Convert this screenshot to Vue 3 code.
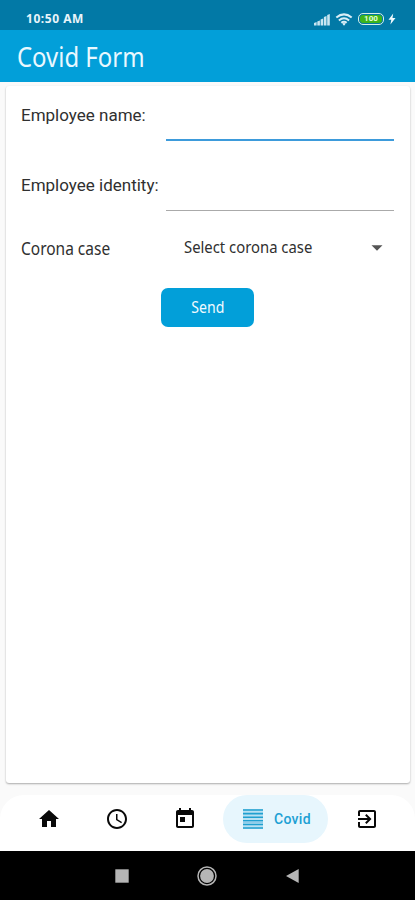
<script setup>
import { ref } from 'vue'
const employeeName = ref('')
const employeeIdentity = ref('')
</script>

<template>
  <div class="screen">
    <header class="status">
      <span class="time">10:50 AM</span>
      <div class="indicators">
        <svg class="signal" width="17" height="13" viewBox="0 0 17 13">
          <path d="M0 12.500v-2.500l2.600-1v3.500zM3.300 12.500V8.500l2.600-1v5zM6.600 12.500V6.500l2.600-1v7zM9.900 12.500V4l2.600-1v9.500zM13.200 12.500V2l2.600-1v11.500z" fill="#cbe6f1" />
        </svg>
        <svg class="wifi" width="18" height="13" viewBox="0 0 18 13">
          <g fill="none" stroke="#d8edf6" stroke-width="2">
            <path d="M1.300 4.600Q9-1.800 16.700 4.600M3.900 7.400Q9 3.200 14.100 7.400M6.300 9.800Q9 7.700 11.700 9.800" />
          </g>
          <path d="M7.200 10.600Q9 9.300 10.800 10.600L9 12.700z" fill="#e2f2f9" />
        </svg>
        <span class="battery"><span class="level">100</span></span>
        <svg class="bolt" width="8" height="12" viewBox="0 0 8 12">
          <path d="M5.200.5.500 6.800h2.800L2.400 11.500 7.500 5H4.500z" fill="#f1fafe" />
        </svg>
      </div>
    </header>
    <div class="appbar"><h1>Covid Form</h1></div>

    <main class="content">
      <section class="card">
        <div class="row name-row">
          <label><span class="t-name">Employee name:</span></label>
          <input v-model="employeeName" class="field active" />
        </div>
        <div class="row identity-row">
          <label><span class="t-identity">Employee identity:</span></label>
          <input v-model="employeeIdentity" class="field" />
        </div>
        <div class="row case-row">
          <label><span class="t-corona">Corona case</span></label>
          <div class="select">
            <span class="t-select">Select corona case</span>
            <svg width="12" height="6" viewBox="0 0 12 6"><path d="M.5.300h11L6 5.800z" fill="#555" /></svg>
          </div>
        </div>
        <button class="send"><span class="t-send">Send</span></button>
      </section>
    </main>

    <nav class="tabs">
      <svg class="icon home" viewBox="0 0 24 24"><path d="M10 20v-6h4v6h5v-8h3L12 3 2 12h3v8z" /></svg>
      <svg class="icon clock" viewBox="0 0 24 24"><path d="M11.990 2C6.470 2 2 6.480 2 12s4.470 10 9.990 10C17.520 22 22 17.520 22 12S17.520 2 11.990 2zM12 20c-4.420 0-8-3.580-8-8s3.580-8 8-8 8 3.580 8 8-3.580 8-8 8zM12.500 7H11v6l5.250 3.150.75-1.230-4.500-2.670z" /></svg>
      <svg class="icon calendar" viewBox="0 0 24 24"><path d="M19 3h-1V1h-2v2H8V1H6v2H5c-1.110 0-1.990.9-1.990 2L3 19c0 1.100.89 2 2 2h14c1.100 0 2-.9 2-2V5c0-1.100-.9-2-2-2zm0 16H5V8h14v11zM7 10h5v5H7z" /></svg>
      <div class="pill">
        <svg class="lines" width="20" height="20" viewBox="0 0 20 20">
          <path d="M0 0h20v20H0z" fill="#b9e1f2" />
          <path d="M0 1h20M0 4.600h20M0 8.300h20M0 11.700h20M0 15.500h20M0 19h20" stroke="#20a0d0" stroke-width="1.600" />
          <path d="M0 13.600h20" stroke="#8fcdea" stroke-width="2.200" />
        </svg>
        <span class="t-covid">Covid</span>
      </div>
      <svg class="icon exit" viewBox="0 0 24 24"><path d="M10.090 15.590 11.500 17l5-5-5-5-1.410 1.410L12.670 11H3v2h9.670zM19 3H5c-1.110 0-2 .9-2 2v4h2V5h14v14H5v-4H3v4c0 1.100.89 2 2 2h14c1.100 0 2-.9 2-2V5c0-1.100-.9-2-2-2z" /></svg>
    </nav>

    <footer class="system">
      <svg class="recent" width="14" height="14" viewBox="0 0 14 14"><path d="M.3.300h13.400v13.400H.3z" fill="#b5b5b5" /></svg>
      <svg class="circle" width="20" height="20" viewBox="0 0 20 20">
        <circle cx="10" cy="10" r="9" fill="none" stroke="#b5b5b5" stroke-width="1.500" />
        <circle cx="10" cy="10" r="6.900" fill="#b5b5b5" />
      </svg>
      <svg class="back" width="13" height="14" viewBox="0 0 13 14"><path d="M12.700 0v14L0 7z" fill="#b5b5b5" /></svg>
    </footer>
  </div>
</template>

<style>
body { margin: 0; background: #fff; }
</style>

<style scoped>
* { box-sizing: border-box; }
.screen {
  width: 415px;
  height: 900px;
  display: flex;
  flex-direction: column;
  background: #fafafa;
  font-family: "Noto Sans", sans-serif;
  color: #303030;
  overflow: hidden;
}
span { white-space: nowrap; }
.status {
  height: 30px;
  flex: none;
  background: #0279a6;
  display: flex;
  justify-content: space-between;
  padding: 8px 19px 0 26px;
}
.time {
  font: 700 12px/22px "Noto Sans", sans-serif;
  letter-spacing: .55px;
  color: #e9f5fa;
}
.indicators { display: flex; align-items: center; height: 22px; }
.wifi { margin-left: 4px; }
.battery {
  margin-left: 5px;
  width: 26px;
  height: 12px;
  border: 1.500px solid #d5efe7;
  border-radius: 5px;
  padding: 1px;
  display: flex;
}
.level {
  flex: 1;
  border-radius: 3px;
  background: #3cb41b;
  color: #e6ffdc;
  font: 700 8px/8px Roboto, sans-serif;
  text-align: center;
}
.bolt { margin-left: 4px; }
.appbar {
  height: 52px;
  flex: none;
  background: #029fd9;
  padding-left: 17px;
  display: flex;
  align-items: center;
}
h1 {
  margin: 2px 0 0;
  font: 400 27px/50px "Noto Sans", sans-serif;
  color: #e9f8ff;
  transform: scaleX(.886);
  transform-origin: left;
}
.content { flex: none; height: 713px; padding: 4px 5px 0 6px; }
.card {
  height: 697px;
  background: #fff;
  border-radius: 3px;
  box-shadow: 0 1px 2px rgba(0, 0, 0, .32);
  padding: 0 16px 0 15px;
  display: flex;
  flex-direction: column;
}
.row { display: flex; font-size: 17px; }
.row label { width: 145px; flex: none; line-height: 24px; }
.row label span, .t-select { display: inline-block; transform-origin: left; }
.name-row { height: 55px; padding-top: 17px; }
.identity-row { height: 70px; padding-top: 32px; }
.field {
  flex: 1;
  min-width: 0;
  border: 0;
  outline: 0;
  background: transparent;
  border-bottom: 1px solid #aaa;
  padding: 0;
}
.field.active { border-bottom: 2px solid #3d9bdb; }
.t-name, .t-identity { font-family: Roboto, sans-serif; font-size: 17px; }
.case-row { padding-top: 25px; height: 77px; }
.select {
  flex: 1;
  display: flex;
  justify-content: space-between;
  align-items: center;
  height: 24px;
  padding: 0 11px 0 18px;
}
.row .t-corona { font-size: 18px; transform: scaleX(.86); }
.t-select { font-size: 17px; line-height: 22px; margin-bottom: 2px; transform: scaleX(.873); }
.send {
  align-self: center;
  width: 93px;
  height: 39px;
  border: 0;
  border-radius: 7px;
  padding: 0;
  background: #029fd9;
  color: #f1faff;
  font: 400 16px/39px "Noto Sans", sans-serif;
}
.t-send { display: inline-block; transform: scaleX(.88); }
.tabs {
  flex: none;
  height: 56px;
  background: #fff;
  border-radius: 24px 24px 0 0;
  display: flex;
  align-items: center;
  padding: 0 36px 8px 37px;
}
.icon { width: 24px; height: 24px; fill: #090909; flex: none; }
.clock, .calendar { margin-left: 44px; }
.exit { margin-left: 27px; }
.pill {
  width: 105px;
  height: 48px;
  margin-left: 26px;
  border-radius: 24px;
  background: #e7f6fd;
  display: flex;
  align-items: center;
  padding-left: 20px;
  gap: 11px;
}
.t-covid { font: 500 14px/20px Roboto, sans-serif; letter-spacing: .3px; color: #20a0d4; }
.system {
  height: 49px;
  flex: none;
  background: #000;
  display: flex;
  align-items: center;
  padding-left: 115px;
}
.circle { margin-left: 68px; }
.back { margin-left: 69px; }
</style>
